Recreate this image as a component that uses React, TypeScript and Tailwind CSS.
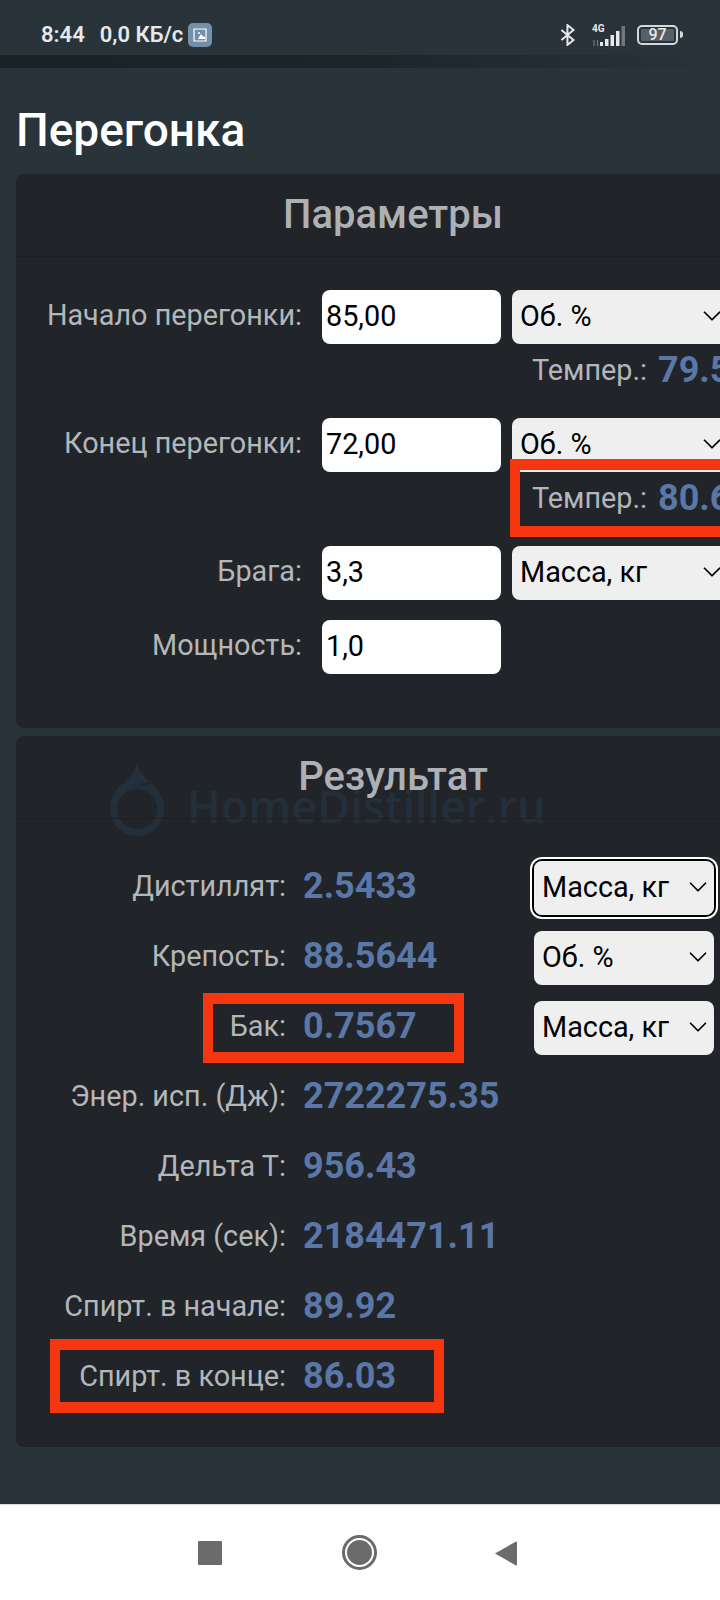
import { ChevronDown } from 'lucide-react'

const labelClass = "text-[#b4b7ba] text-[28.8px] leading-none text-right pb-[4px]"
const valueClass = "text-[#5a77a8] text-[36px] font-bold leading-none pb-[4px]"

function Select({ value, w, className = "" }: { value: string; w: string; className?: string }) {
  return (
    <div className={`relative shrink-0 h-[54px] rounded-lg ${w} ${className}`}>
      <select
        defaultValue={value}
        className="appearance-none w-full h-full bg-[#efefef] rounded-lg pl-2 pb-[2px] text-black text-[28.8px] leading-none outline-none"
      >
        <option>{value}</option>
      </select>
      <ChevronDown className="absolute right-[1px] top-[11px] w-[30px] h-[30px] text-black pointer-events-none" strokeWidth={1.4} />
    </div>
  )
}

function ParamRow({ label, value, unit, temp }: { label: string; value: string; unit?: string; temp?: string }) {
  return (
    <div className="flex flex-col">
      <div className="flex items-center h-[54px]">
        <div className={`w-[286px] ${labelClass}`}>{label}</div>
        <input
          defaultValue={value}
          className="ml-5 w-[179px] h-[54px] bg-white rounded-lg px-1 pb-[3px] text-black text-[28.8px] outline-none"
        />
        {unit && <Select value={unit} w="w-[216px]" className="ml-[11px]" />}
      </div>
      {temp && (
        <div className="flex items-center h-[52px] pl-[516px] pt-[4px] whitespace-nowrap">
          <span className={labelClass}>Темпер.:</span>
          <span className={`ml-[11px] ${valueClass}`}>{temp}</span>
        </div>
      )}
    </div>
  )
}

function ResultRow({ label, value, unit, focused }: { label: string; value: string; unit?: string; focused?: boolean }) {
  return (
    <div className="flex items-center h-[54px]">
      <div className={`w-[270px] ${labelClass}`}>{label}</div>
      <div className={`ml-[17px] w-[231px] ${valueClass}`}>{value}</div>
      {unit && (
        <Select
          value={unit}
          w="w-[180px]"
          className={focused ? "shadow-[0_0_0_2px_#000,0_0_0_4px_#fff]" : ""}
        />
      )}
    </div>
  )
}

function RedBox({ className }: { className: string }) {
  return <div className={`absolute border-solid border-[#f53611] border-x-[10px] border-y-[11px] ${className}`} />
}

function StatusBar() {
  return (
    <div className="h-[55px] shrink-0 flex items-center pl-[41px] pt-[14px] text-[#e6e8ea] relative">
      <span className="text-[22px] font-semibold">8:44</span>
      <span className="ml-[15px] text-[22px] font-semibold">0,0 КБ/с</span>
      <div className="ml-[5px] w-6 h-6 rounded-[5px] bg-[#7290aa] flex items-center justify-center">
        <svg width="14" height="15" viewBox="0 0 14 15" fill="none">
          <path d="M1 2h12v12H1z" stroke="#fff" strokeWidth="1.2" />
          <path d="M5 12l3-5 1.5 2 2.5 1v2z" fill="#fff" />
          <circle cx="6" cy="6" r="1" fill="#fff" />
        </svg>
      </div>
      <div className="ml-auto mr-[37px] flex items-center">
        <svg className="-ml-1" width="18" height="22" viewBox="0 0 16 20" fill="none" stroke="#e6e8ea" strokeWidth="1.8">
          <path d="M2 5.5l11 9-5.5 4.5V1l5.500 4.500-11 9" />
        </svg>
        <div className="relative ml-[15px] w-[36px] h-[24px]">
          <span className="absolute left-0 top-[-2px] text-[10px] font-bold text-[#e6e8ea]">4G</span>
          <svg className="absolute left-0 top-0" width="36" height="24" viewBox="0 0 36 24">
            <path d="M2 17v6M5.500 17v6" stroke="#6f787e" strokeWidth="1.200" />
            <rect x="8" y="19" width="3" height="4" fill="#e6e8ea" />
            <rect x="13" y="16" width="3.500" height="7" fill="#e6e8ea" />
            <rect x="18.500" y="12" width="3.500" height="11" fill="#e6e8ea" />
            <rect x="24" y="8" width="3.500" height="15" fill="#e6e8ea" />
            <rect x="29.500" y="3" width="3.500" height="20" fill="#6f787e" />
          </svg>
        </div>
        <div className="ml-[9px] w-[41px] h-[20px] rounded-[5px] border-2 border-[#d5d8da] p-[2px] flex">
          <div className="flex-1 bg-[#566067] rounded-[1px] text-[16px] leading-[12px] font-medium text-[#e6e8ea] text-center">97</div>
        </div>
        <div className="ml-[2px] w-[3px] h-[7px] rounded-r-sm bg-[#d5d8da]" />
      </div>
    </div>
  )
}

function NavBar() {
  return (
    <div className="h-[96px] shrink-0 bg-white border-t border-[#d8dcdf] relative">
      <div className="absolute left-[198px] top-[36px] w-6 h-[24px] bg-[#6b6b6b] rounded-[1px]" />
      <div className="absolute left-[342px] top-[30px] w-[35px] h-[35px] rounded-full border-[3px] border-[#6b6b6b] bg-white flex items-center justify-center">
        <div className="w-[25px] h-[25px] rounded-full bg-[#6b6b6b]" />
      </div>
      <svg className="absolute left-[494px] top-[35px]" width="24" height="27" viewBox="0 0 24 27">
        <path d="M1 13.500L22 1.500q1 0 1 1v22q0 1-1 1z" fill="#6b6b6b" />
      </svg>
    </div>
  )
}

export default function App() {
  return (
    <div
      className="relative w-[720px] h-[1600px] overflow-hidden flex flex-col bg-[#29333a]"
      style={{ fontFamily: 'Roboto, "Liberation Sans", sans-serif' }}
    >
      <StatusBar />
      <div className="h-[13px] shrink-0 bg-gradient-to-r from-[#1b2226] via-[#1d2529] to-[#29333a]" />

      <div className="flex-1 flex flex-col">
        <h1 className="pl-4 mt-[33px] h-[73px] text-[46px] font-medium leading-[58px] text-white">Перегонка</h1>

        <section className="ml-4 w-[754px] bg-[#212529] rounded-lg">
          <div className="h-[83px] flex items-center justify-center border-b border-[#1c2024] text-[#adb0b4] text-[40px] font-medium">
            Параметры
          </div>
          <div className="pt-[33px] pb-[54px] flex flex-col gap-[20px]">
            <div className="flex flex-col gap-[22px]">
              <ParamRow label="Начало перегонки:" value="85,00" unit="Об. %" temp="79.5" />
              <ParamRow label="Конец перегонки:" value="72,00" unit="Об. %" temp="80.6" />
              <ParamRow label="Брага:" value="3,3" unit="Масса, кг" />
            </div>
            <ParamRow label="Мощность:" value="1,0" />
          </div>
        </section>

        <section className="relative ml-4 mt-2 w-[754px] bg-[#212529] rounded-lg">
          {/* site watermark, sits under the card text */}
          <div className="absolute left-[94px] top-[27px] flex items-end pointer-events-none">
            <svg width="54" height="74" viewBox="0 0 54 74" fill="none">
              <path
                fillRule="evenodd"
                d="M27 0C25 8 20 14 14 20C5 26 0 35 0 46A27 27 0 0 0 54 46C54 34 48 26 41 19C34 15 29 8 27 0ZM27 26A20 20 0 1 0 27.100 26Z"
                fill="#232f3a"
              />
              <path d="M41 20C36 20 32 20 30 23" stroke="#212529" strokeWidth="2" />
            </svg>
            <span className="ml-[23px] mb-[3px] text-[#232f3a] text-[45px] leading-[56px] font-semibold" style={{ fontFamily: '"Open Sans", sans-serif' }}>
              HomeDistiller.ru
            </span>
          </div>

          <div className="relative h-[83px] flex items-center justify-center border-b border-[#1c2024] text-[#adb0b4] text-[40px] font-medium">
            Результат
          </div>
          <div className="relative pt-[42px] pb-[42px] flex flex-col gap-4">
            <ResultRow label="Дистиллят:" value="2.5433" unit="Масса, кг" focused />
            <ResultRow label="Крепость:" value="88.5644" unit="Об. %" />
            <ResultRow label="Бак:" value="0.7567" unit="Масса, кг" />
            <ResultRow label="Энер. исп. (Дж):" value="2722275.35" />
            <ResultRow label="Дельта Т:" value="956.43" />
            <ResultRow label="Время (сек):" value="2184471.11" />
            <ResultRow label="Спирт. в начале:" value="89.92" />
            <ResultRow label="Спирт. в конце:" value="86.03" />
          </div>
        </section>
      </div>

      <NavBar />

      <RedBox className="left-[510px] top-[459px] w-[230px] h-[78px]" />
      <RedBox className="left-[203px] top-[993px] w-[261px] h-[70px]" />
      <RedBox className="left-[50px] top-[1339px] w-[394px] h-[74px]" />
    </div>
  )
}
